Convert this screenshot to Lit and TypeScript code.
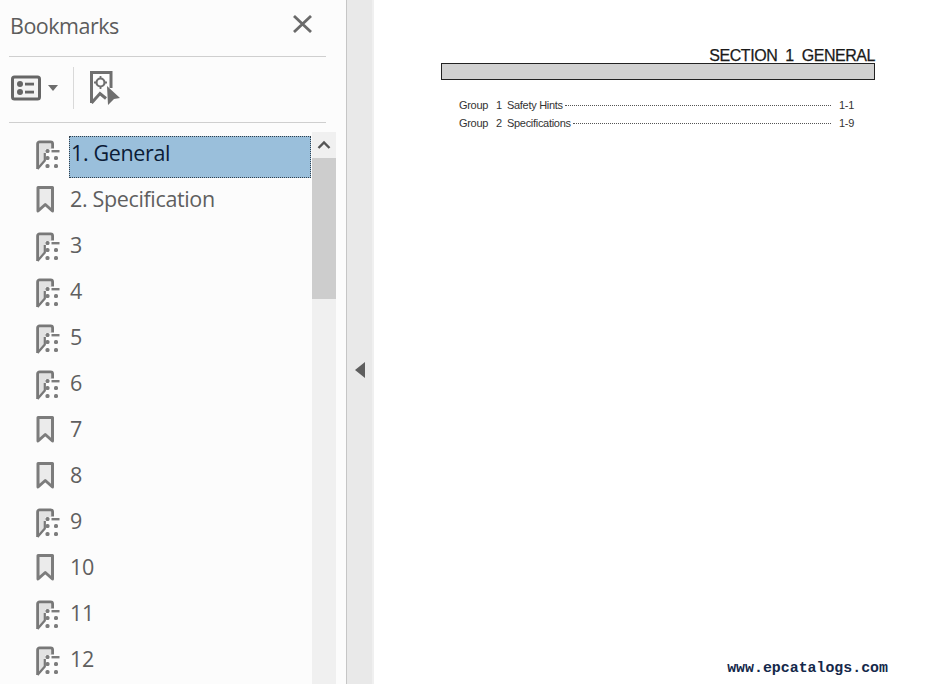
import { LitElement, html, css, svg } from "lit";
import { customElement } from "lit/decorators.js";

const treeIcon = svg`<svg class="ic" width="26" height="32" viewBox="0 0 26 32">
  <path d="M3 3h13.500v7h-6.500v11l-7 8z" fill="#e2e2e2"/>
  <path d="M2.600 30V4.800a2 2 0 0 1 2-2h11a2 2 0 0 1 2 2v4.700" fill="none" stroke="#787878" stroke-width="2.800"/>
  <path d="M9.800 14v7.500L2.500 30" fill="none" stroke="#787878" stroke-width="2.200"/>
  <rect x="10.500" y="10" width="4" height="4" rx="1.600" fill="#7c7c7c"/>
  <rect x="16.500" y="11" width="8" height="2.400" fill="#7c7c7c"/>
  <rect x="10.500" y="17" width="4" height="4" rx="1.600" fill="#7c7c7c"/>
  <rect x="19" y="17" width="4" height="4" rx="1.600" fill="#7c7c7c"/>
  <rect x="10.500" y="25" width="4" height="4" rx="1.600" fill="#7c7c7c"/>
  <rect x="19" y="25" width="4" height="4" rx="1.600" fill="#7c7c7c"/>
</svg>`;

const markIcon = svg`<svg class="ic" width="26" height="32" viewBox="0 0 26 32">
  <path d="M3 2.500h14.500v23.500l-7.250-6.500-7.250 6.500z" fill="#ebebeb" stroke="#7c7c7c" stroke-width="3" stroke-linejoin="round"/>
</svg>`;

const rows: [string, boolean][] = [
  ["1. General", true],
  ["2. Specification", false],
  ["3", true],
  ["4", true],
  ["5", true],
  ["6", true],
  ["7", false],
  ["8", false],
  ["9", true],
  ["10", false],
  ["11", true],
  ["12", true],
];

@customElement("app-root")
export class AppRoot extends LitElement {
  static styles = css`
    :host {
      display: flex;
      width: 939px;
      height: 684px;
      overflow: hidden;
      background: #fff;
      font-family: "Open Sans", "Noto Sans", sans-serif;
    }
    .side {
      box-sizing: border-box;
      width: 347px;
      height: 684px;
      flex: none;
      background: #fcfcfc;
      border-right: 1px solid #c6c6c6;
      padding-left: 9px;
      display: flex;
      flex-direction: column;
    }
    .head {
      box-sizing: border-box;
      width: 317px;
      height: 57px;
      border-bottom: 1px solid #cfcfcf;
      display: flex;
      align-items: center;
      justify-content: space-between;
      padding: 0 14px 8px 1px;
    }
    .title {
      font-size: 21.500px;
      letter-spacing: -0.5px;
      color: #5c5c5c;
      line-height: 30px;
      margin-top: 4px;
    }
    .tools {
      box-sizing: border-box;
      width: 317px;
      height: 66px;
      border-bottom: 1px solid #cfcfcf;
      display: flex;
      align-items: center;
      padding: 0 0 3px 2px;
    }
    .caret {
      width: 0;
      height: 0;
      border-left: 5px solid transparent;
      border-right: 5px solid transparent;
      border-top: 6px solid #6d6d6d;
      margin: 0 0 0 7px;
    }
    .vsep {
      width: 1px;
      height: 42px;
      background: #d9d9d9;
      margin: 0 15px 0 15px;
    }
    .tree {
      flex: 1;
      min-height: 0;
      display: flex;
      margin-top: 9px;
      width: 327px;
    }
    .list {
      width: 303px;
      flex: none;
      padding-top: 4px;
      overflow: hidden;
    }
    .row {
      height: 46px;
      display: flex;
      align-items: flex-start;
    }
    .ic {
      flex: none;
      margin: 3px 0 0 26px;
    }
    .label {
      box-sizing: border-box;
      width: 242px;
      height: 42px;
      margin-left: 8px;
      padding-left: 0;
      font-size: 21.500px;
      letter-spacing: -0.35px;
      line-height: 32px;
      color: #5f5f5f;
      border: 1px solid transparent;
      white-space: nowrap;
    }
    .label.sel {
      background: #9abfdb;
      color: #0b1b36;
      border: 1px dotted #33404c;
      padding-left: 1px;
    }
    .bar {
      width: 24px;
      flex: none;
      background: #f0f0f0;
      display: flex;
      flex-direction: column;
    }
    .up {
      height: 26px;
      display: flex;
      align-items: center;
      justify-content: center;
    }
    .thumb {
      height: 141px;
      background: #cdcdcd;
    }
    .split {
      box-sizing: border-box;
      width: 27px;
      height: 684px;
      flex: none;
      background: #e9e9e9;
      border-right: 2px solid #f0f0f0;
      display: flex;
      align-items: center;
      justify-content: center;
      padding: 56px 0 0 0;
    }
    .tri {
      width: 0;
      height: 0;
      border-top: 8px solid transparent;
      border-bottom: 8px solid transparent;
      border-right: 10px solid #5e5e5e;
    }
    .page {
      flex: 1;
      position: relative;
      background: #fff;
      padding: 46px 0 0 67px;
      font-family: "Liberation Sans", Arial, sans-serif;
      color: #2a2a2a;
    }
    .sect {
      width: 434px;
      height: 17px;
      text-align: right;
      font-size: 16px;
      line-height: 19px;
      letter-spacing: -0.45px;
      color: #1a1a1a;
      -webkit-text-stroke: 0.25px #1a1a1a;
      white-space: pre;
    }
    .rule {
      box-sizing: border-box;
      width: 434px;
      height: 17px;
      background: #d1d1d1;
      border: 1px solid #222;
    }
    .toc {
      margin: 17px 0 0 18px;
      width: 395px;
      font-size: 11px;
      line-height: 17.500px;
      letter-spacing: -0.3px;
      color: #333;
    }
    .tr {
      display: flex;
      align-items: center;
      white-space: pre;
    }
    .g {
      width: 37px;
    }
    .n {
      width: 11px;
    }
    .dots {
      flex: 1;
      border-bottom: 1px dotted #555;
      margin: 0 0 0 2px;
      height: 0;
    }
    .pg {
      width: 23px;
      text-align: right;
    }
    .site {
      position: absolute;
      right: 51px;
      top: 659px;
      font-family: "Liberation Mono", "DejaVu Sans Mono", monospace;
      font-weight: 700;
      font-size: 14.900px;
      line-height: 18px;
      color: #14284a;
    }
  `;

  render() {
    return html`
      <div class="side">
        <div class="head">
          <span class="title">Bookmarks</span>
          <svg width="19" height="18" viewBox="0 0 19 18">
            <path d="M1 1l17 16M18 1L1 17" stroke="#6a6a6a" stroke-width="2.800" fill="none"/>
          </svg>
        </div>
        <div class="tools">
          <svg width="30" height="26" viewBox="0 0 30 26">
            <rect x="1.500" y="2" width="27" height="22" rx="2" fill="#f4f4f4" stroke="#666" stroke-width="3"/>
            <circle cx="9" cy="9" r="3" fill="#666"/>
            <circle cx="9" cy="17" r="3" fill="#666"/>
            <rect x="14" y="7.700" width="9" height="2.800" fill="#666"/>
            <rect x="14" y="15.700" width="9" height="2.800" fill="#666"/>
          </svg>
          <span class="caret"></span>
          <span class="vsep"></span>
          <svg width="32" height="36" viewBox="0 0 32 36">
            <path d="M2.500 33V2.500H22V18" fill="none" stroke="#6f6f6f" stroke-width="3"/>
            <path d="M2.500 33l8.500-9.500 6 5" fill="none" stroke="#6f6f6f" stroke-width="3"/>
            <circle cx="11.500" cy="12.500" r="4" fill="none" stroke="#6f6f6f" stroke-width="2.200"/>
            <path d="M11.500 6v3M11.500 16v3M5 12.500h3M15 12.500h3" stroke="#6f6f6f" stroke-width="1.800"/>
            <path d="M18 16l13 12-6 1-6 6z" fill="#6f6f6f"/>
          </svg>
        </div>
        <div class="tree">
          <div class="list">
            ${rows.map(
              ([t, kids], i) => html`<div class="row">
                ${kids ? treeIcon : markIcon}
                <div class="label ${i === 0 ? "sel" : ""}">${t}</div>
              </div>`
            )}
          </div>
          <div class="bar">
            <div class="up">
              <svg width="14" height="10" viewBox="0 0 14 10">
                <path d="M1.500 8L7 2.500 12.500 8" fill="none" stroke="#555" stroke-width="2.400"/>
              </svg>
            </div>
            <div class="thumb"></div>
          </div>
        </div>
      </div>
      <div class="split"><span class="tri"></span></div>
      <div class="page">
        <div class="sect">SECTION  1  GENERAL</div>
        <div class="rule"></div>
        <div class="toc">
          <div class="tr"><span class="g">Group</span><span class="n">1</span><span>Safety Hints</span><span class="dots"></span><span class="pg">1-1</span></div>
          <div class="tr"><span class="g">Group</span><span class="n">2</span><span>Specifications</span><span class="dots"></span><span class="pg">1-9</span></div>
        </div>
        <div class="site">www.epcatalogs.com</div>
      </div>
    `;
  }
}
